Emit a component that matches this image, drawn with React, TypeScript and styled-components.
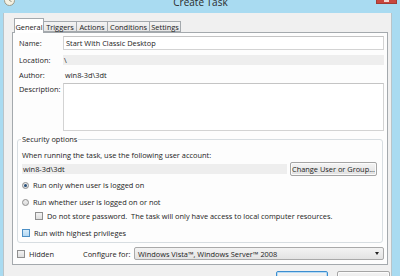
import React from "react";
import styled, { createGlobalStyle } from "styled-components";

const FONT = `"Segoe UI", "Open Sans", "Noto Sans", sans-serif`;

const GlobalStyle = createGlobalStyle`
  html, body {
    margin: 0;
    padding: 0;
    background: #a9dbf1;
  }
  body {
    width: 400px;
    height: 276px;
    overflow: hidden;
    font-family: ${FONT};
    font-size: 7.4px;
    color: #1c1c1c;
  }
  * {
    box-sizing: border-box;
  }
`;

const TABS = ["General", "Triggers", "Actions", "Conditions", "Settings"];
const TAB_WIDTHS = [30, 34, 32, 43, 32];

const Window = styled.div`
  width: 400px;
  height: 276px;
  display: flex;
  flex-direction: column;
  background: #a9dbf1;
  overflow: hidden;
`;

const TitleBar = styled.div`
  height: 13px;
  flex: none;
  display: grid;
  grid-template-columns: 1fr auto 1fr;
  align-items: start;
  padding: 0 3px 0 4px;
`;

const Title = styled.div`
  font-size: 10px;
  line-height: 10px;
  margin-top: -3px;
  color: #2b2b2b;
`;

const CloseButton = styled.div`
  justify-self: end;
  width: 21px;
  height: 4px;
  background: #c9463d;
  border: 1px solid #a33b33;
  border-top: none;
  display: flex;
  justify-content: center;
`;

const CloseMark = styled.div`
  width: 5px;
  height: 2px;
  background: #f3d6d3;
`;

const Frame = styled.div`
  flex: 1;
  display: flex;
  min-height: 0;
`;

const FrameEdge = styled.div<{ $w: number }>`
  width: ${(p) => p.$w}px;
  flex: none;
  background: #a9dbf1;
`;

const Client = styled.div`
  flex: 1;
  background: #f0f0f0;
  border-left: 1px solid #b9c4c9;
  border-right: 1px solid #b9c4c9;
  padding: 5px 3px 0 8px;
  display: flex;
  flex-direction: column;
`;

const TabRow = styled.div`
  display: flex;
  align-items: flex-end;
  height: 14px;
  margin-left: 2px;
  position: relative;
  z-index: 1;
`;

const Tab = styled.div<{ $active?: boolean; $w: number }>`
  width: ${(p) => p.$w}px;
  height: ${(p) => (p.$active ? 15 : 11)}px;
  margin-bottom: ${(p) => (p.$active ? -1 : 0)}px;
  border: 1px solid #a4a9ad;
  border-bottom: ${(p) => (p.$active ? "none" : "1px solid #a4a9ad")};
  margin-right: -1px;
  background: ${(p) =>
    p.$active ? "#ffffff" : "linear-gradient(#f3f3f3, #e6e6e6)"};
  display: flex;
  align-items: center;
  justify-content: center;
  line-height: 10px;
  padding-top: ${(p) => (p.$active ? 1 : 0)}px;
`;

const Panel = styled.div`
  height: 233px;
  flex: none;
  background: #fdfdfd;
  border: 1px solid #a4a9ad;
  padding: 3px 3px 4px 4px;
  display: flex;
  flex-direction: column;
`;

const FormRow = styled.div<{ $top?: number; $align?: string; $indent?: number }>`
  display: flex;
  align-items: ${(p) => p.$align ?? "center"};
  margin-top: ${(p) => p.$top ?? 0}px;
  margin-left: ${(p) => p.$indent ?? 0}px;
`;

const Label = styled.div<{ $w?: number; $top?: number }>`
  width: ${(p) => p.$w ?? 44}px;
  flex: none;
  line-height: 10px;
  margin-top: ${(p) => p.$top ?? 0}px;
`;

const TextInput = styled.div`
  flex: 1;
  height: 14px;
  background: #ffffff;
  border: 1px solid #d3d3d3;
  border-top-color: #c4c4c4;
  padding-left: 2px;
  line-height: 12px;
`;

const ReadonlyField = styled.div<{ $w?: number }>`
  ${(p) => (p.$w ? `width: ${p.$w}px;` : "flex: 1;")}
  height: 10px;
  background: #eeeeee;
  padding-left: 1px;
  line-height: 10px;
`;

const PlainValue = styled.div`
  flex: 1;
  height: 10px;
  padding-left: 2px;
  line-height: 10px;
`;

const TextArea = styled.div`
  flex: 1;
  height: 48px;
  background: #ffffff;
  border: 1px solid #d3d3d3;
  border-top-color: #c4c4c4;
`;

const GroupBox = styled.fieldset`
  margin: 3px 1px 0 0;
  padding: 0 4px 4px 4px;
  border: 1px solid #d7dde1;
  border-radius: 3px;
  min-width: 0;
`;

const Legend = styled.legend`
  padding: 0 1px;
  margin-left: -1px;
  line-height: 10px;
`;

const Text = styled.div<{ $top?: number }>`
  line-height: 10px;
  margin-top: ${(p) => p.$top ?? 0}px;
  white-space: nowrap;
`;

const Button = styled.div<{ $w: number; $default?: boolean }>`
  width: ${(p) => p.$w}px;
  height: 14px;
  flex: none;
  border: 1px solid ${(p) => (p.$default ? "#3c8ed0" : "#a5a5a5")};
  border-radius: 2px;
  background: linear-gradient(#f4f4f4, #e0e0e0);
  box-shadow: inset 0 0 0 1px ${(p) => (p.$default ? "#b8dcf5" : "#fbfbfb")};
  display: flex;
  align-items: center;
  justify-content: center;
  line-height: 10px;
  white-space: nowrap;
`;

const Radio = styled.div<{ $checked?: boolean }>`
  width: 7px;
  height: 7px;
  flex: none;
  border-radius: 50%;
  border: 1px solid #8d8d8d;
  background: linear-gradient(#eeeeee, #dcdcdc);
  display: flex;
  align-items: center;
  justify-content: center;
  margin-right: 4px;
  &::after {
    content: "";
    width: 3px;
    height: 3px;
    border-radius: 50%;
    background: ${(p) => (p.$checked ? "#28507a" : "transparent")};
  }
`;

const Check = styled.div<{ $hot?: boolean }>`
  width: 8px;
  height: 8px;
  flex: none;
  border: 1px solid ${(p) => (p.$hot ? "#4c8fc5" : "#8f8f8f")};
  background: ${(p) =>
    p.$hot ? "linear-gradient(#d6ecfb, #b3d7f2)" : "linear-gradient(#f3f3f3, #dedede)"};
  margin-right: 4px;
`;

const Select = styled.div`
  flex: 1;
  height: 13px;
  border: 1px solid #a9a9a9;
  border-radius: 2px;
  background: linear-gradient(#f3f3f3, #e3e3e3);
  display: flex;
  align-items: center;
  justify-content: space-between;
  padding: 0 4px 0 3px;
  line-height: 10px;
`;

const Arrow = styled.div`
  width: 0;
  height: 0;
  border-left: 2.5px solid transparent;
  border-right: 2.5px solid transparent;
  border-top: 3px solid #222;
`;

const BottomBar = styled.div`
  display: flex;
  justify-content: flex-end;
  gap: 9px;
  margin: 6px -2px 0 0;
`;

const ClockIcon = () => (
  <svg width="11" height="7" viewBox="0 0 11 7">
    <circle cx="5.5" cy="0.5" r="5" fill="#f4f1e2" stroke="#9a9a8a" strokeWidth="1" />
    <path d="M5.5 0.5 L5.5 -2.5 M5.5 0.5 L7.5 1.5" stroke="#7a7a6a" strokeWidth="0.8" />
  </svg>
);

const App = () => (
  <Window>
    <GlobalStyle />
    <TitleBar>
      <ClockIcon />
      <Title>Create Task</Title>
      <CloseButton>
        <CloseMark />
      </CloseButton>
    </TitleBar>
    <Frame>
      <FrameEdge $w={3} />
      <Client>
        <TabRow>
          {TABS.map((t, i) => (
            <Tab key={t} $active={i === 0} $w={TAB_WIDTHS[i]}>
              {t}
            </Tab>
          ))}
        </TabRow>
        <Panel>
          <FormRow $indent={2}>
            <Label>Name:</Label>
            <TextInput>Start With Classic Desktop</TextInput>
          </FormRow>
          <FormRow $indent={2} $top={5}>
            <Label>Location:</Label>
            <ReadonlyField>\</ReadonlyField>
          </FormRow>
          <FormRow $indent={2} $top={5}>
            <Label>Author:</Label>
            <PlainValue>win8-3d\3dt</PlainValue>
          </FormRow>
          <FormRow $indent={2} $top={3} $align="flex-start">
            <Label $top={1}>Description:</Label>
            <TextArea />
          </FormRow>

          <GroupBox>
            <Legend>Security options</Legend>
            <Text $top={6}>When running the task, use the following user account:</Text>
            <FormRow $top={2}>
              <ReadonlyField $w={265}>win8-3d\3dt</ReadonlyField>
              <Button $w={87} style={{ marginLeft: 3 }}>
                Change User or Group...
              </Button>
            </FormRow>
            <FormRow $top={4}>
              <Radio $checked />
              <Text>Run only when user is logged on</Text>
            </FormRow>
            <FormRow $top={7}>
              <Radio />
              <Text>Run whether user is logged on or not</Text>
            </FormRow>
            <FormRow $top={4} $indent={13}>
              <Check />
              <Text>Do not store password.&nbsp; The task will only have access to local computer resources.</Text>
            </FormRow>
            <FormRow $top={7}>
              <Check $hot />
              <Text>Run with highest privileges</Text>
            </FormRow>
          </GroupBox>

          <FormRow $top={4}>
            <Check />
            <Label $w={54}>Hidden</Label>
            <Label $w={51}>Configure for:</Label>
            <Select>
              <span>Windows Vista™, Windows Server™ 2008</span>
              <Arrow />
            </Select>
          </FormRow>
        </Panel>
        <BottomBar>
          <Button $w={52} $default>
            OK
          </Button>
          <Button $w={53}>Cancel</Button>
        </BottomBar>
      </Client>
      <FrameEdge $w={8} />
    </Frame>
  </Window>
);

export default App;
